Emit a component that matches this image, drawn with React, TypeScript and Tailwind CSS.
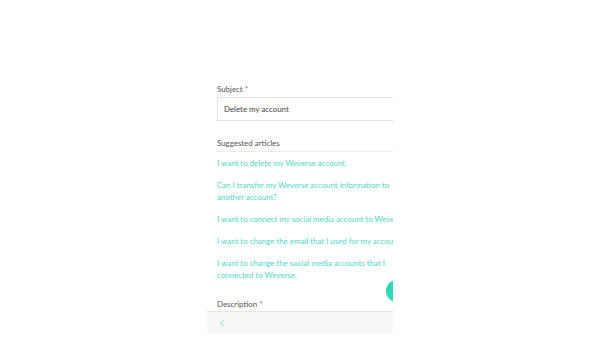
import { ChevronLeft } from "lucide-react";

const articles: string[][] = [
  ["I want to delete my Weverse account."],
  ["Can I transfer my Weverse account information to", "another account?"],
  ["I want to connect my social media account to Weverse."],
  ["I want to change the email that I used for my account."],
  ["I want to change the social media accounts that I", "connected to Weverse."],
];

export default function App() {
  return (
    <div
      className="w-[600px] h-[337px] bg-white flex pl-[207px] overflow-hidden"
      style={{ fontFamily: "Lato, 'Open Sans', sans-serif" }}
    >
      <div className="relative w-[186px] h-[333px] overflow-hidden bg-white">
        <div className="w-[210px] pl-[10px] pt-[83px] text-[7.9px] leading-[12px]">
          <div className="text-[#555]">
            Subject <span className="text-[#777]">*</span>
          </div>
          <div className="mt-[2px] h-[24px] w-[200px] border border-[#e2e2e2] flex items-center pl-[6px] text-[#444]">
            Delete my account
          </div>

          <div className="mt-[16px] pb-[2px] border-b border-[#ececec] text-[#555]">
            Suggested articles
          </div>

          <div className="mt-[5px] flex flex-col gap-[10px] text-[#4dd8c6]">
            {articles.map((lines, i) => (
              <div key={i} className="whitespace-nowrap">
                {lines.map((l, j) => (
                  <div key={j}>{l}</div>
                ))}
              </div>
            ))}
          </div>

          <div className="mt-[17px] text-[#555]">
            Description <span className="text-[#777]">*</span>
          </div>
          <div className="mt-[2px] h-[24px] border border-[#e2e2e2]" />
        </div>

        <div className="absolute left-[179px] top-[280px] w-[22px] h-[22px] rounded-full bg-[#2fd8b6]" />

        <div className="absolute left-0 bottom-0 w-full h-[22px] bg-[#f7f7f7] border-t border-[#e6e6e6] flex items-center pl-[9px]">
          <ChevronLeft size={12} strokeWidth={2} className="text-[#7fd8d4]" />
        </div>
      </div>
    </div>
  );
}
